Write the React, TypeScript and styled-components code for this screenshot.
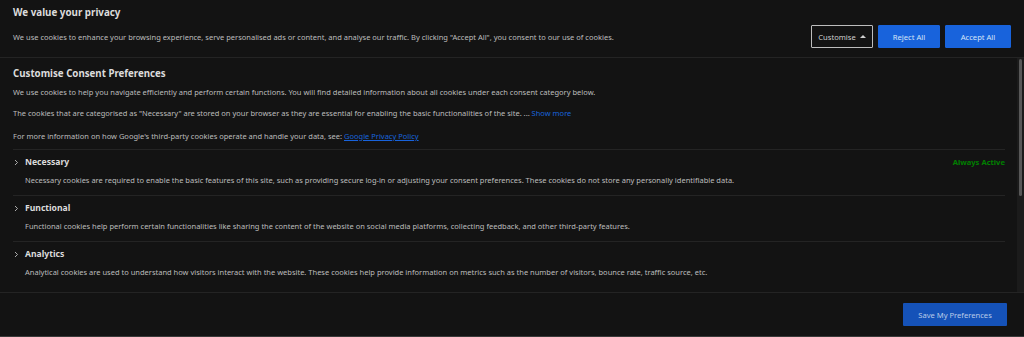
import React from 'react'
import styled, { createGlobalStyle } from 'styled-components'

const bg = '#131313'
const text = '#bdbdbd'
const heading = '#dcdcdc'
const blue = '#1863dc'
const line = '#242424'

const GlobalStyle = createGlobalStyle`
  html, body {
    margin: 0;
    background: ${bg};
    font-family: "Noto Sans", "Open Sans", sans-serif;
  }
  * {
    box-sizing: border-box;
  }
`

const Page = styled.div`
  height: 337px;
  display: flex;
  flex-direction: column;
  background: ${bg};
  color: ${text};
`

const Notice = styled.div`
  height: 58px;
  padding: 6px 13px 0;
  border-bottom: 1px solid ${line};
  flex-shrink: 0;
`

const NoticeTitle = styled.h2`
  margin: 0;
  font-size: 9.8px;
  line-height: 14px;
  font-weight: 700;
  color: ${heading};
`

const NoticeRow = styled.div`
  display: flex;
  align-items: center;
  justify-content: space-between;
  margin-top: 5px;
`

const NoticeText = styled.p`
  margin: 0;
  font-size: 7.5px;
  color: ${text};
`

const Buttons = styled.div`
  display: flex;
  gap: 5px;
`

const Button = styled.button<{ $outline?: boolean; $width: number }>`
  height: 23px;
  width: ${(p) => p.$width}px;
  font-family: inherit;
  font-size: 7.6px;
  border-radius: 1px;
  cursor: pointer;
  display: flex;
  align-items: center;
  justify-content: center;
  gap: 4px;
  border: 1px solid ${(p) => (p.$outline ? '#bdbdbd' : blue)};
  background: ${(p) => (p.$outline ? 'transparent' : blue)};
  color: ${(p) => (p.$outline ? '#cfcfcf' : '#d6e3f8')};
`

const Caret = styled.span`
  width: 0;
  height: 0;
  border-left: 3px solid transparent;
  border-right: 3px solid transparent;
  border-bottom: 3px solid #cfcfcf;
  margin-top: -1px;
`

const Body = styled.div`
  flex: 1;
  min-height: 0;
  display: flex;
  border-bottom: 1px solid ${line};
`

const Preferences = styled.div`
  flex: 1;
  overflow: hidden;
  padding: 9px 12px 0 13px;
`

const ScrollTrack = styled.div`
  width: 7px;
  flex-shrink: 0;
  background: #1b1b1b;
  padding: 1px 2px 0;
`

const ScrollThumb = styled.div`
  height: 137px;
  background: #585858;
  border-radius: 2px;
`

const PrefTitle = styled.h3`
  margin: 0 0 5px;
  font-size: 9.7px;
  line-height: 14px;
  font-weight: 700;
  color: ${heading};
`

const Para = styled.p<{ $gap?: number }>`
  margin: 0 0 ${(p) => p.$gap ?? 8}px;
  font-size: 7.5px;
  line-height: 13px;
  color: ${text};
`

const Link = styled.a<{ $underline?: boolean }>`
  color: ${blue};
  text-decoration: ${(p) => (p.$underline ? 'underline' : 'none')};
`

const Category = styled.div`
  border-top: 1px solid ${line};
  padding: 6px 0 8px;
`

const CatHead = styled.div`
  display: flex;
  align-items: center;
  height: 12px;
`

const Chevron = styled.span`
  width: 12px;
  display: flex;
  align-items: center;
  padding-left: 1px;
`

const CatTitle = styled.span`
  flex: 1;
  font-size: 8.6px;
  font-weight: 700;
  color: ${heading};
`

const Active = styled.span`
  font-size: 7.6px;
  font-weight: 700;
  color: #008000;
`

const CatDesc = styled.p`
  margin: 6px 0 0 12px;
  font-size: 7.5px;
  line-height: 13px;
  color: ${text};
`

const Footer = styled.div`
  height: 44px;
  flex-shrink: 0;
  border-bottom: 1px solid #3a3a3a;
  display: flex;
  align-items: center;
  justify-content: flex-end;
  padding-right: 17px;
`

const SaveButton = styled.button`
  width: 104px;
  height: 23px;
  background: #1552b8;
  border: none;
  border-radius: 1px;
  color: #b9cbe8;
  font-family: inherit;
  font-size: 7.6px;
`

const categories = [
  {
    title: 'Necessary',
    active: true,
    desc: 'Necessary cookies are required to enable the basic features of this site, such as providing secure log-in or adjusting your consent preferences. These cookies do not store any personally identifiable data.',
  },
  {
    title: 'Functional',
    desc: 'Functional cookies help perform certain functionalities like sharing the content of the website on social media platforms, collecting feedback, and other third-party features.',
  },
  {
    title: 'Analytics',
    desc: 'Analytical cookies are used to understand how visitors interact with the website. These cookies help provide information on metrics such as the number of visitors, bounce rate, traffic source, etc.',
  },
]

const ChevronIcon = () => (
  <svg width="5" height="7" viewBox="0 0 5 7">
    <path d="M1 1 L3.5 3.5 L1 6" fill="none" stroke="#bdbdbd" strokeWidth="0.9" />
  </svg>
)

export default function App() {
  return (
    <>
      <GlobalStyle />
      <Page>
        <Notice>
          <NoticeTitle>We value your privacy</NoticeTitle>
          <NoticeRow>
            <NoticeText>
              We use cookies to enhance your browsing experience, serve personalised ads or content, and
              analyse our traffic. By clicking "Accept All", you consent to our use of cookies.
            </NoticeText>
            <Buttons>
              <Button $outline $width={62}>
                Customise <Caret />
              </Button>
              <Button $width={62}>Reject All</Button>
              <Button $width={66}>Accept All</Button>
            </Buttons>
          </NoticeRow>
        </Notice>
        <Body>
          <Preferences>
            <PrefTitle>Customise Consent Preferences</PrefTitle>
            <Para>
              We use cookies to help you navigate efficiently and perform certain functions. You will find
              detailed information about all cookies under each consent category below.
            </Para>
            <Para $gap={10}>
              The cookies that are categorised as "Necessary" are stored on your browser as they are
              essential for enabling the basic functionalities of the site. ...{' '}
              <Link href="#">Show more</Link>
            </Para>
            <Para $gap={6}>
              For more information on how Google's third-party cookies operate and handle your data, see:{' '}
              <Link href="#" $underline>
                Google Privacy Policy
              </Link>
            </Para>
            {categories.map((c) => (
              <Category key={c.title}>
                <CatHead>
                  <Chevron>
                    <ChevronIcon />
                  </Chevron>
                  <CatTitle>{c.title}</CatTitle>
                  {c.active && <Active>Always Active</Active>}
                </CatHead>
                <CatDesc>{c.desc}</CatDesc>
              </Category>
            ))}
          </Preferences>
          <ScrollTrack>
            <ScrollThumb />
          </ScrollTrack>
        </Body>
        <Footer>
          <SaveButton>Save My Preferences</SaveButton>
        </Footer>
      </Page>
    </>
  )
}
